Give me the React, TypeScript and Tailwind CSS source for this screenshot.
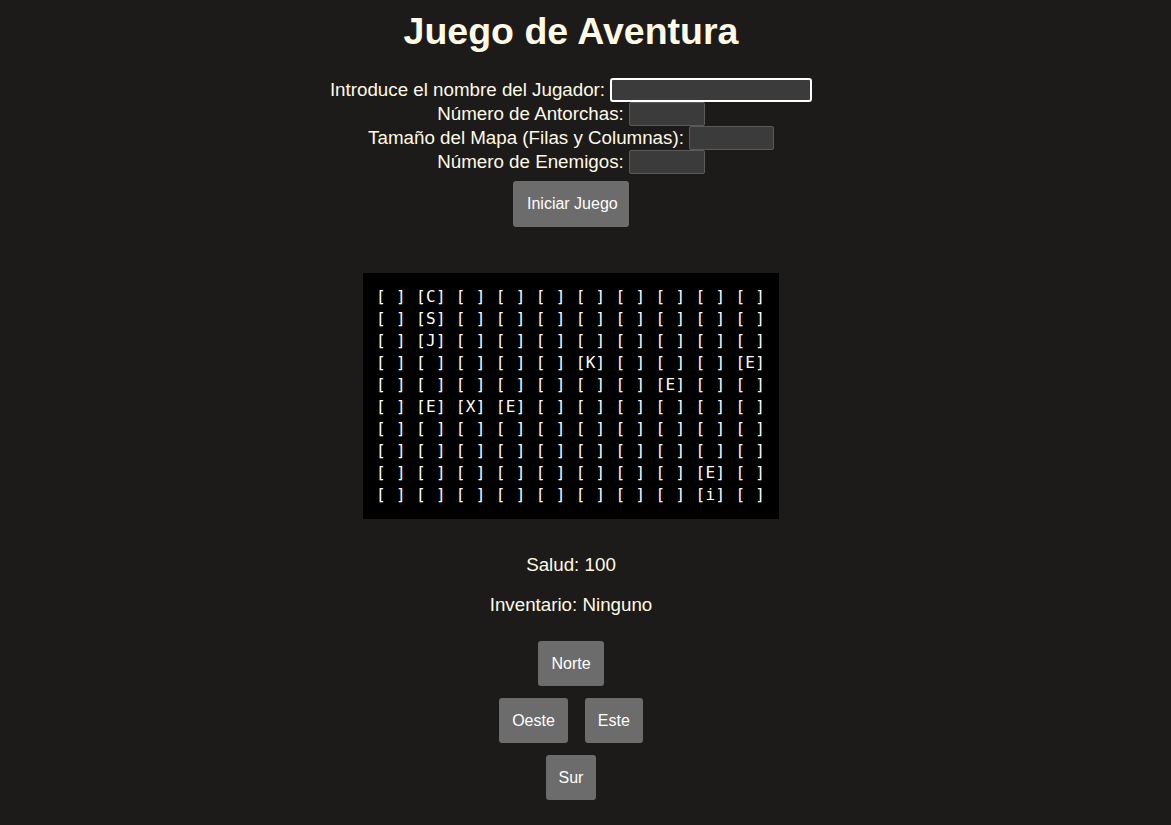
import React from 'react';

const SIZE = 10;

// contenido de cada celda del mapa, por fila y columna
const marks: Record<string, string> = {
  '0,1': 'C',
  '1,1': 'S',
  '2,1': 'J',
  '3,5': 'K',
  '3,9': 'E',
  '4,7': 'E',
  '5,1': 'E',
  '5,2': 'X',
  '5,3': 'E',
  '8,8': 'E',
  '9,8': 'i',
};

function MoveButton({ label }: { label: string }) {
  return (
    <button className="bg-[#6c6c6c] text-white text-[16px] leading-[17px] px-[13px] py-[14px] rounded-[3px] whitespace-nowrap">
      {label}
    </button>
  );
}

export default function App() {
  const rows: string[] = [];
  for (let r = 0; r < SIZE; r++) {
    let line = '';
    for (let c = 0; c < SIZE; c++) {
      const m = marks[`${r},${c}`];
      line += `[${m ?? ' '}]` + (c < SIZE - 1 ? ' ' : '');
    }
    rows.push(line);
  }

  return (
    <div className="min-h-screen bg-[#1c1b1a]">
      <div
        className="w-[1142px] text-[#fffae6] flex flex-col items-center"
        style={{ fontFamily: '"Liberation Sans", Arial, sans-serif' }}
      >
        <h1 className="text-[37.5px] font-bold leading-[42px] mt-[10px]">Juego de Aventura</h1>

        <div className="mt-[26px] flex flex-col items-center text-[18.75px] leading-[24px]">
          <div className="flex items-center">
            <span>Introduce el nombre del Jugador:</span>
            <input className="ml-[5px] w-[202px] h-[24px] bg-[#3b3b3b] border-2 border-white rounded-[3px] outline-none" />
          </div>
          <div className="flex items-center">
            <span>Número de Antorchas:</span>
            <input className="ml-[5px] w-[76px] h-[24px] bg-[#3b3b3b] border border-[#5a5a5a] rounded-[2px]" />
          </div>
          <div className="flex items-center">
            <span>Tamaño del Mapa (Filas y Columnas):</span>
            <input className="ml-[5px] w-[85px] h-[24px] bg-[#3b3b3b] border border-[#5a5a5a] rounded-[2px]" />
          </div>
          <div className="flex items-center">
            <span>Número de Enemigos:</span>
            <input className="ml-[5px] w-[76px] h-[24px] bg-[#3b3b3b] border border-[#5a5a5a] rounded-[2px]" />
          </div>
          <button className="mt-[7px] bg-[#6c6c6c] text-white text-[16px] leading-[18px] px-[14px] py-[14px] rounded-[3px] whitespace-nowrap w-[116px]">
            Iniciar Juego
          </button>
        </div>

        <pre
          className="mt-[46px] bg-black text-white text-[16px] leading-[22px] px-[13px] py-[13px] w-[416px] tracking-[0.35px]"
          style={{ fontFamily: '"DejaVu Sans Mono", "Liberation Mono", monospace' }}
        >
          {rows.join('\n')}
        </pre>

        <p className="mt-[35px] text-[18.75px] leading-[22px]">Salud: 100</p>
        <p className="mt-[18px] text-[18.75px] leading-[22px]">Inventario: Ninguno</p>

        <div className="mt-[25px] flex flex-col items-center gap-[12px]">
          <MoveButton label="Norte" />
          <div className="flex gap-[17px]">
            <MoveButton label="Oeste" />
            <MoveButton label="Este" />
          </div>
          <MoveButton label="Sur" />
        </div>
      </div>
    </div>
  );
}
